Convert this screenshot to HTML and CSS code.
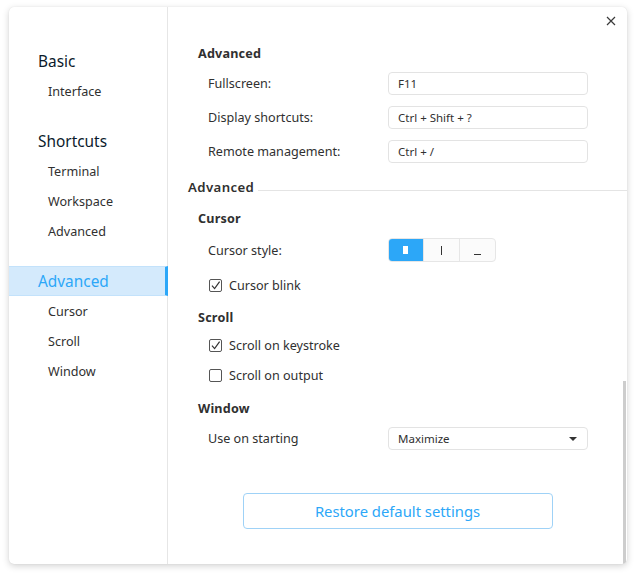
FILE: index.html
```html
<!DOCTYPE html>
<html>
<head>
<meta charset="utf-8">
<link rel="stylesheet" href="styles.css">
</head>
<body>
<div class="window">
  <nav class="sidebar">
    <div class="group">
      <div class="gtitle">Basic</div>
      <div class="item">Interface</div>
    </div>
    <div class="group">
      <div class="gtitle">Shortcuts</div>
      <div class="item">Terminal</div>
      <div class="item">Workspace</div>
      <div class="item">Advanced</div>
    </div>
    <div class="group">
      <div class="gtitle selected">Advanced</div>
      <div class="item">Cursor</div>
      <div class="item">Scroll</div>
      <div class="item">Window</div>
    </div>
  </nav>
  <main class="content">
    <div class="heading h-first">Advanced</div>
    <div class="row">
      <span class="label">Fullscreen:</span>
      <div class="field">F11</div>
    </div>
    <div class="row">
      <span class="label">Display shortcuts:</span>
      <div class="field">Ctrl + Shift + ?</div>
    </div>
    <div class="row">
      <span class="label">Remote management:</span>
      <div class="field">Ctrl + /</div>
    </div>

    <div class="section"><span class="section-text">Advanced</span><span class="section-line"></span></div>

    <div class="heading h-cursor">Cursor</div>
    <div class="row row-cursor">
      <span class="label">Cursor style:</span>
      <div class="segmented">
        <div class="seg active"><span class="block"></span></div>
        <div class="seg"><span class="ibeam"></span></div>
        <div class="seg"><span class="under"></span></div>
      </div>
    </div>
    <div class="check-row tall">
      <span class="box checked"><svg viewBox="0 0 13 13" width="13" height="13"><path d="M3 6.6 L5.6 9.6 L10.6 2.6" fill="none" stroke="#333" stroke-width="1.2"/></svg></span>
      <span class="check-label">Cursor blink</span>
    </div>

    <div class="heading h-scroll">Scroll</div>
    <div class="check-row">
      <span class="box checked"><svg viewBox="0 0 13 13" width="13" height="13"><path d="M3 6.6 L5.6 9.6 L10.6 2.6" fill="none" stroke="#333" stroke-width="1.2"/></svg></span>
      <span class="check-label">Scroll on keystroke</span>
    </div>
    <div class="check-row">
      <span class="box"></span>
      <span class="check-label">Scroll on output</span>
    </div>

    <div class="heading h-window">Window</div>
    <div class="row">
      <span class="label">Use on starting</span>
      <div class="field select">Maximize<span class="caret"></span></div>
    </div>

    <div class="btn-wrap">
      <button class="restore">Restore default settings</button>
    </div>
  </main>
  <button class="close" aria-label="Close"><svg viewBox="0 0 10 10" width="10" height="10"><path d="M1 1 L9 9 M9 1 L1 9" stroke="#3a3a3a" stroke-width="1.2" fill="none"/></svg></button>
  <div class="scrollbar"></div>
</div>
</body>
</html>
```

FILE: styles.css
```css
* { box-sizing: border-box; }
html, body { margin: 0; padding: 0; background: #ffffff; }
body {
  font-family: "Noto Sans", "DejaVu Sans", sans-serif;
  color: #303030;
  width: 636px;
  height: 576px;
  overflow: hidden;
}
.window {
  position: relative;
  margin: 7px 0 0 9px;
  width: 618px;
  height: 557px;
  background: #fff;
  border-radius: 5px;
  box-shadow: 0 2px 7px rgba(0,0,0,0.18), 0 0 1px rgba(0,0,0,0.12);
  display: flex;
  overflow: hidden;
}
.sidebar {
  width: 159px;
  flex: none;
  border-right: 1px solid #e6e6e6;
  padding-top: 39px;
  display: flex;
  flex-direction: column;
  gap: 20px;
}
.gtitle {
  height: 30px;
  line-height: 28px;
  padding-top: 2px;
  padding-left: 29px;
  font-size: 15.4px;
  color: #0b1a2b;
}
.gtitle.selected {
  background: #d4eafc;
  border-top: 1px solid #c3e2fb;
  border-bottom: 1px solid #c3e2fb;
  line-height: 26px;
  padding-top: 2px;
  color: #2ca7f8;
  margin-right: -1px;
  border-right: 3px solid #2ca7f8;
}
.item {
  height: 30px;
  line-height: 28px;
  padding-top: 2px;
  padding-left: 39px;
  font-size: 12.6px;
  color: #303030;
}
.content {
  flex: 1;
  padding-top: 33px;
  display: flex;
  flex-direction: column;
}
.heading {
  height: 26px;
  line-height: 24px;
  padding-top: 2px;
  padding-left: 30px;
  font-size: 12.6px;
  font-weight: 700;
  letter-spacing: 0.2px;
  color: #303030;
}
.row {
  height: 34px;
  display: flex;
  align-items: center;
  padding-left: 40px;
  font-size: 12.6px;
}
.label { width: 180px; flex: none; }
.field {
  width: 200px;
  height: 23px;
  border: 1px solid #e3e3e3;
  border-radius: 4px;
  background: #fff;
  font-size: 11.5px;
  line-height: 21px;
  padding-left: 9px;
  color: #303030;
  position: relative;
}
.section {
  margin-top: 8px;
  height: 22px;
  display: flex;
  align-items: center;
  padding-left: 20px;
}
.section-text {
  font-size: 13.2px;
  font-weight: 600;
  letter-spacing: 0.4px;
  color: #303030;
}
.section-line {
  flex: 1;
  height: 1px;
  background: #e4e4e4;
  margin-left: 4px;
  margin-top: 6px;
}
.h-cursor { margin-top: 7px; }
.row-cursor { margin-top: 2px; }
.segmented {
  display: flex;
  width: 108px;
  height: 24px;
  border: 1px solid #e6e6e6;
  border-radius: 4px;
  overflow: hidden;
  background: #fbfbfb;
}
.seg {
  flex: 1;
  display: flex;
  align-items: center;
  justify-content: center;
  border-left: 1px solid #e6e6e6;
}
.seg:first-child { border-left: none; }
.seg.active { background: #2ca7f8; margin: -1px 0 -1px -1px; }
.block { width: 5px; height: 8px; background: #fff; }
.ibeam { width: 1px; height: 9px; background: #333; }
.under { width: 7px; height: 1px; background: #333; margin-top: 8px; }
.check-row {
  height: 30px;
  display: flex;
  align-items: center;
  padding-left: 41px;
  font-size: 12.6px;
}
.check-row.tall { height: 34px; margin-top: 1px; }
.box {
  width: 13px;
  height: 13px;
  border: 1px solid #555;
  border-radius: 2px;
  margin-right: 7px;
  position: relative;
  flex: none;
}
.box svg { position: absolute; left: -1px; top: -1px; }
.h-scroll { margin-top: 2px; }
.h-window { margin-top: 5px; }
.caret {
  position: absolute;
  right: 10px;
  top: 9px;
  width: 0;
  height: 0;
  border-left: 4px solid transparent;
  border-right: 4px solid transparent;
  border-top: 4px solid #333;
}
.btn-wrap {
  margin-top: 38px;
  display: flex;
  justify-content: center;
}
.restore {
  width: 310px;
  height: 36px;
  border: 1px solid #9fd2f7;
  border-radius: 4px;
  background: #fff;
  color: #2ca7f8;
  font-family: "Noto Sans", "DejaVu Sans", sans-serif;
  font-size: 14.8px;
  padding: 0;
}
.close {
  position: absolute;
  right: 11px;
  top: 9px;
  width: 10px;
  height: 10px;
  padding: 0;
  border: none;
  background: none;
}
.close svg { display: block; }
.scrollbar {
  position: absolute;
  right: 1px;
  top: 374px;
  width: 3px;
  height: 183px;
  background: #cdcdcd;
}
```
